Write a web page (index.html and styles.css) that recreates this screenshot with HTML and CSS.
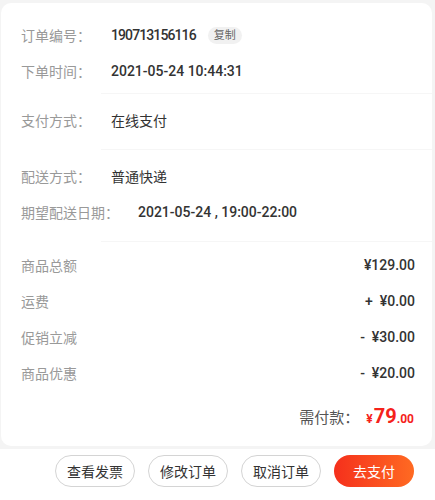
FILE: index.html
```html
<!DOCTYPE html>
<html lang="zh-CN">
<head>
    <meta charset="UTF-8">
    <meta name="viewport" content="width=device-width, initial-scale=1.0">
    <title>订单详情</title>
    <link rel="stylesheet" href="styles.css">
</head>
<body>
    <div class="card">
        <div class="section first">
            <div class="row">
                <span class="label">订单编号：</span>
                <span class="value num order-no">190713156116</span>
                <span class="copy">复制</span>
            </div>
            <div class="row">
                <span class="label">下单时间：</span>
                <span class="value num">2021-05-24 10:44:31</span>
            </div>
        </div>
        <div class="line"></div>
        <div class="section">
            <div class="row">
                <span class="label">支付方式：</span>
                <span class="value">在线支付</span>
            </div>
        </div>
        <div class="line"></div>
        <div class="section">
            <div class="row">
                <span class="label">配送方式：</span>
                <span class="value">普通快递</span>
            </div>
            <div class="row">
                <span class="label wide">期望配送日期：</span>
                <span class="value num">2021-05-24 , 19:00-22:00</span>
            </div>
        </div>
        <div class="line"></div>
        <div class="section amounts">
            <div class="row">
                <span class="label">商品总额</span>
                <span class="amount">¥129.00</span>
            </div>
            <div class="row">
                <span class="label">运费</span>
                <span class="amount">+&nbsp; ¥0.00</span>
            </div>
            <div class="row">
                <span class="label">促销立减</span>
                <span class="amount">-&nbsp; ¥30.00</span>
            </div>
            <div class="row">
                <span class="label">商品优惠</span>
                <span class="amount">-&nbsp; ¥20.00</span>
            </div>
            <div class="total">
                <span class="total-label">需付款：</span>
                <span class="price"><small>¥</small>79<small>.00</small></span>
            </div>
        </div>
    </div>
    <div class="bottom-bar">
        <button class="btn">查看发票</button>
        <button class="btn">修改订单</button>
        <button class="btn">取消订单</button>
        <button class="btn pay">去支付</button>
    </div>
</body>
</html>
```

FILE: styles.css
```css
body {
    margin: 0;
    padding: 0;
    background: #f4f4f4;
    font-family: Roboto, "Noto Sans CJK SC", sans-serif;
    font-size: 14px;
    color: #333;
}
.card {
    margin: 3px 3px 0 1px;
    background: #fff;
    border-radius: 10px;
    padding: 0 17px 0 20px;
    height: 443px;
    box-sizing: border-box;
}
.section {
    padding: 8px 0 11px;
}
.section.first {
    padding: 14px 0 4px;
}
.section.amounts {
    padding: 5px 0 0;
}
.line {
    height: 1px;
    background: #f6f6f6;
    margin-left: 80px;
    margin-right: -17px;
}
.row {
    display: flex;
    align-items: center;
    height: 36px;
}
.label {
    color: #999;
    width: 90px;
    flex-shrink: 0;
}
.label.wide {
    width: 117px;
}
.value {
    color: #333;
}
.value.num {
    font-weight: 500;
}
.order-no {
    letter-spacing: -0.9px;
}
.copy {
    margin-left: 12px;
    background: #f1f1f1;
    color: #666;
    font-size: 11px;
    line-height: 17px;
    padding: 0 6px;
    border-radius: 9px;
}
.amounts .label {
    flex: 1;
}
.amount {
    color: #333;
    font-weight: 500;
    text-align: right;
}
.total {
    display: flex;
    justify-content: flex-end;
    align-items: baseline;
    height: 36px;
    line-height: 36px;
    margin-top: 7px;
}
.total-label {
    color: #555;
    font-size: 15px;
    margin-right: 7px;
}
.price {
    color: #f5221b;
    font-weight: bold;
    font-size: 20px;
}
.price small {
    font-size: 12px;
    margin-right: 1px;
}
.bottom-bar {
    background: #fff;
    margin-top: 3px;
    height: 51px;
    display: flex;
    justify-content: flex-end;
    align-items: flex-start;
    gap: 13px;
    padding: 6px 21px 0 0;
    box-sizing: border-box;
}
.btn {
    width: 80px;
    height: 32px;
    border: 1px solid #d4d4d4;
    border-radius: 16px;
    background: #fff;
    color: #333;
    font-family: "Noto Sans CJK SC", sans-serif;
    font-size: 14px;
    padding: 0;
}
.btn.pay {
    border: none;
    color: #fff;
    background: linear-gradient(90deg, #f5301c, #ff6a22);
}
```
